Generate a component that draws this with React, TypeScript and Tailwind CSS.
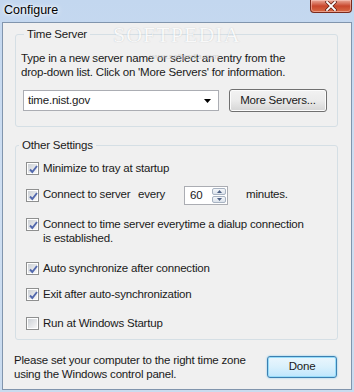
import React from 'react'

const FONT = { fontFamily: '"Liberation Sans", Arial, sans-serif' }

function Check({ checked }: { checked: boolean }) {
  return (
    <span className="relative flex h-[13px] w-[13px] shrink-0 items-center justify-center border border-[#8e8f8f] bg-white">
      <span className="h-[9px] w-[9px] bg-gradient-to-br from-[#cdd1d6] to-[#f7f7f7]" />
      {checked && (
        <svg className="absolute left-[1px] top-[1px]" width="11" height="11" viewBox="0 0 11 11">
          <path d="M2 5.5 L4.3 8 L9 2" fill="none" stroke="#5268ad" strokeWidth="1.9" />
        </svg>
      )}
    </span>
  )
}

function CheckRow({ checked, children, className = '' }: { checked: boolean; children: React.ReactNode; className?: string }) {
  return (
    <div className={`flex items-start gap-[4px] ${className}`}>
      <span className="mt-[1px]">
        <Check checked={checked} />
      </span>
      <span className="leading-[14px]">{children}</span>
    </div>
  )
}

export default function App() {
  return (
    <div
      className="relative flex h-[392px] w-[354px] flex-col overflow-hidden bg-gradient-to-b from-[#c3d7ef] via-[#cfdff2] to-[#c9dbef] px-[2px] pb-[2px] pt-[22px] text-[11.5px] tracking-[-0.2px] text-[#1a1a1a]"
      style={FONT}
    >
      {/* title bar */}
      <div className="absolute left-[4px] top-[2px] text-[12.5px] leading-[16px] tracking-normal text-black [text-shadow:0_0_6px_#ffffff,0_0_3px_#ffffff]">
        Configure
      </div>
      <div className="absolute right-[2px] top-0 flex h-[13px] w-[42px] items-center justify-center rounded-b-[4px] border border-t-0 border-[#7a2a1c] bg-gradient-to-b from-[#e9a99a] via-[#c8462c] to-[#d86a45] shadow-[inset_0_0_0_1px_rgba(255,210,200,0.5)]">
        <svg width="12" height="10" viewBox="0 0 12 10">
          <path d="M2 1 L10 9 M10 1 L2 9" stroke="#5a1a10" strokeWidth="3.2" strokeLinecap="square" />
          <path d="M2 1 L10 9 M10 1 L2 9" stroke="#ffffff" strokeWidth="1.8" strokeLinecap="square" />
        </svg>
      </div>

      {/* watermark */}
      <div className="pointer-events-none absolute left-[113px] top-[18px] text-[22px] tracking-[1px] text-white opacity-60 [text-shadow:0_0_1px_#9aa4ad]" style={{ fontFamily: '"Liberation Serif", serif' }}>
        SOFTPEDIA
      </div>
      <div className="pointer-events-none absolute left-[150px] top-[51px] text-[8px] tracking-normal text-[#c9c9c9] opacity-70">
        www.softpedia.com
      </div>

      {/* client area */}
      <div className="flex flex-1 flex-col border border-[#8195ad] bg-[#f0f0f0]">
        <fieldset className="ml-[12px] mr-[13px] mt-[4px] rounded-[3px] border border-[#d5dfe5] px-[5px] pb-[14px]">
          <legend className="ml-[3px] px-[3px] leading-[14px]">Time Server</legend>
          <p className="mt-[10px] leading-[14px]">
            Type in a new server name or select an entry from the
            <br />
            drop-down list. Click on 'More Servers' for information.
          </p>
          <div className="mt-[10px] flex items-center">
            <div className="ml-[2px] flex h-[21px] w-[196px] items-center justify-between border border-[#abadb3] bg-white pl-[4px] pr-[7px]">
              <span>time.nist.gov</span>
              <svg width="7" height="4" viewBox="0 0 7 4">
                <path d="M0 0 H7 L3.5 4 Z" fill="#000" />
              </svg>
            </div>
            <div className="ml-[10px] flex h-[23px] w-[98px] items-center justify-center rounded-[3px] border border-[#707070] bg-gradient-to-b from-[#f2f2f2] via-[#ebebeb] to-[#d5d5d5] shadow-[inset_0_0_0_1px_#fcfcfc]">
              More Servers...
            </div>
          </div>
        </fieldset>

        <fieldset className="ml-[12px] mr-[13px] mt-[11px] rounded-[3px] border border-[#d5dfe5] pb-[9px] pl-[10px] pr-[5px]">
          <legend className="-ml-[7px] px-[3px] leading-[14px]">Other Settings</legend>
          <CheckRow checked className="mt-[9px]">Minimize to tray at startup</CheckRow>
          <div className="mt-[10px] flex h-[20px] items-center">
            <Check checked />
            <span className="ml-[4px] w-[95px]">Connect to server</span>
            <span className="w-[46px]">every</span>
            <div className="flex h-[19px] w-[44px] border border-[#abadb3] bg-white">
              <span className="flex-1 pl-[5px] leading-[17px]">60</span>
              <div className="my-[1px] mr-[1px] flex w-[14px] flex-col gap-[1px]">
                <div className="flex flex-1 items-center justify-center rounded-[2px] border border-[#a8b3c2] bg-gradient-to-b from-[#f4f6f9] to-[#dce3ec]">
                  <svg width="5" height="3" viewBox="0 0 5 3"><path d="M0 3 L2.5 0 L5 3 Z" fill="#4d6185" /></svg>
                </div>
                <div className="flex flex-1 items-center justify-center rounded-[2px] border border-[#a8b3c2] bg-gradient-to-b from-[#f4f6f9] to-[#dce3ec]">
                  <svg width="5" height="3" viewBox="0 0 5 3"><path d="M0 0 L5 0 L2.5 3 Z" fill="#4d6185" /></svg>
                </div>
              </div>
            </div>
            <span className="ml-[18px]">minutes.</span>
          </div>
          <CheckRow checked className="mt-[12px]">
            Connect to time server everytime a dialup connection
            <br />
            is established.
          </CheckRow>
          <CheckRow checked className="mt-[16px]">Auto synchronize after connection</CheckRow>
          <CheckRow checked className="mt-[12px]">Exit after auto-synchronization</CheckRow>
          <CheckRow checked={false} className="mt-[15px]">Run at Windows Startup</CheckRow>
        </fieldset>

        <div className="ml-[11px] mr-[14px] mt-[13px] flex items-center justify-between">
          <p className="leading-[14px]">
            Please set your computer to the right time zone
            <br />
            using the Windows control panel.
          </p>
          <div className="flex h-[22px] w-[70px] items-center justify-center rounded-[3px] border border-[#3c7fb1] bg-gradient-to-b from-[#eaf6fd] via-[#d9f0fc] to-[#bee6fd] shadow-[inset_0_0_0_1px_#97dcf9,0_0_2px_#6fc5f0]">
            Done
          </div>
        </div>
      </div>
    </div>
  )
}
